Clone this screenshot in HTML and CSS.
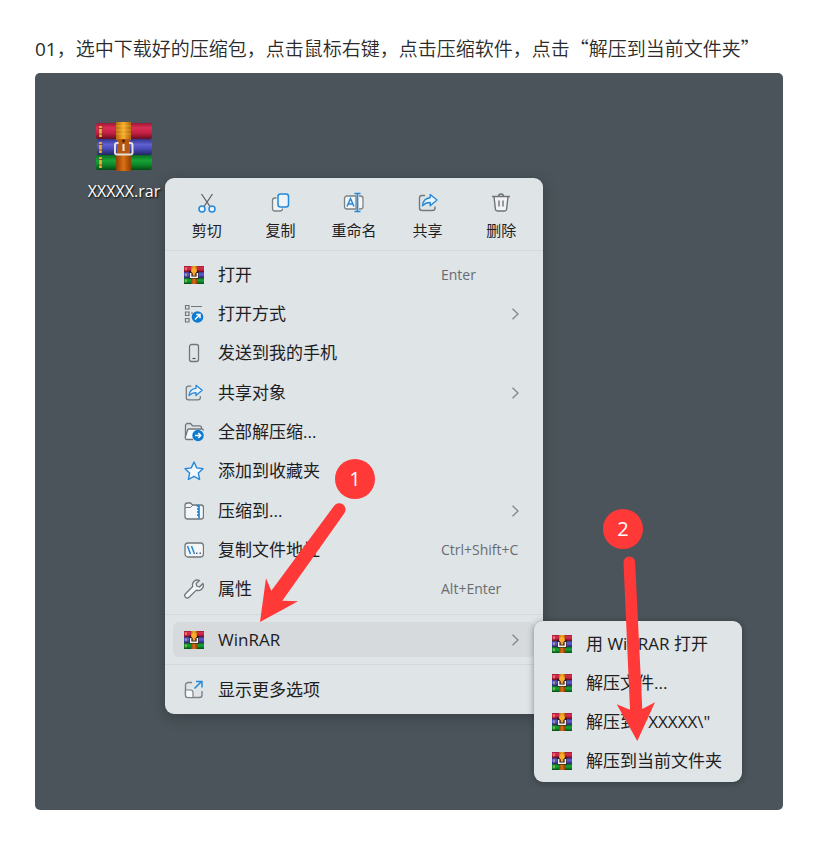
FILE: index.html
```html
<!DOCTYPE html>
<html lang="zh-CN">
<head>
<meta charset="utf-8">
<meta name="viewport" content="width=device-width, initial-scale=1">
<title>解压步骤</title>
<link rel="stylesheet" href="styles.css">
</head>
<body>
<svg class="defs" aria-hidden="true">
  <defs>
    <linearGradient id="red" x1="0" y1="0" x2="0" y2="1"><stop offset="0" stop-color="#9c1836"/><stop offset=".3" stop-color="#d92f55"/><stop offset=".65" stop-color="#c01f42"/><stop offset="1" stop-color="#650d20"/></linearGradient>
    <linearGradient id="blue" x1="0" y1="0" x2="0" y2="1"><stop offset="0" stop-color="#33358a"/><stop offset=".35" stop-color="#5f60d2"/><stop offset=".65" stop-color="#4547b2"/><stop offset="1" stop-color="#24265f"/></linearGradient>
    <linearGradient id="green" x1="0" y1="0" x2="0" y2="1"><stop offset="0" stop-color="#0b6a20"/><stop offset=".35" stop-color="#18a336"/><stop offset=".65" stop-color="#0d8a2a"/><stop offset="1" stop-color="#054a14"/></linearGradient>
    <linearGradient id="belt" x1="0" y1="0" x2="1" y2="0"><stop offset="0" stop-color="#b56a0a"/><stop offset=".5" stop-color="#f5ad2c"/><stop offset="1" stop-color="#b0640a"/></linearGradient>
    <linearGradient id="belt-low" x1="0" y1="0" x2="1" y2="0"><stop offset="0" stop-color="#8c3f05"/><stop offset=".5" stop-color="#dc7013"/><stop offset="1" stop-color="#8c3f05"/></linearGradient>
    <symbol id="rar-large" viewBox="0 0 58 50">
      <rect x="1" y="1" width="56" height="16" rx="2" fill="url(#red)"/>
      <rect x="2" y="17" width="55" height="16" rx="2" fill="url(#blue)"/>
      <rect x="1" y="33" width="56" height="15" rx="2" fill="url(#green)"/>
      <path d="M5.500 4v11M5.500 20v11M5.500 35v11" stroke="#e8b53c" stroke-width="2.600"/>
      <path d="M3.500 6.500h4.500M3.500 12h4.500M3.500 22.500h4.500M3.500 28h4.500M3.500 37.500h4.500M3.500 43h4.500" stroke="#6a3a1c" stroke-width=".8"/>
      <path d="M21 0h15v18H21z" fill="url(#belt)"/>
      <path d="M21 4h15M21 8h15M21 12h15" stroke="#ffd45a" stroke-width="1.200" opacity=".4"/>
      <path d="M22 17h13v15H22z" fill="#b8570e"/>
      <path d="M21 32h15v17H21z" fill="url(#belt-low)"/>
      <circle cx="28.500" cy="19" r="1.400" fill="#4c2004"/>
      <path d="M23.500 21h-1.500a2 2 0 0 0-2 2v7.500a2 2 0 0 0 2 2h13.500a2 2 0 0 0 2-2V23a2 2 0 0 0-2-2H34" fill="none" stroke="#e4e1dc" stroke-width="2"/>
      <path d="M28.500 22v7" stroke="#f1eee9" stroke-width="2"/>
    </symbol>
    <symbol id="rar-small" viewBox="0 0 60 54">
      <rect width="60" height="18" fill="url(#red)"/>
      <rect y="18" width="60" height="18" fill="url(#blue)"/>
      <rect y="36" width="60" height="18" fill="url(#green)"/>
      <path d="M6 4v9M6 22v9M6 40v9" stroke="#f1c27b" stroke-width="3"/>
      <path d="M16 14h28v24H16z" fill="#2c1a18"/>
      <path d="M21 0h18v18H21z" fill="url(#belt)"/>
      <path d="M21 38h18v16H21z" fill="url(#belt-low)"/>
      <circle cx="30" cy="14" r="8" fill="#ffad2e"/>
      <path d="M20 21v13h20V21" fill="none" stroke="#f5efea" stroke-width="4.500"/>
      <path d="M30 20v9" stroke="#f3a23c" stroke-width="8"/>
    </symbol>
    <symbol id="cut" viewBox="0 0 22 22">
      <path d="M5.500 2 14 14.500M16.500 2 8 14.500" fill="none" stroke="#64605f" stroke-width="1.300"/>
      <g fill="#e8f3fb" stroke="#2688d8" stroke-width="1.500"><circle cx="6" cy="17" r="3"/><circle cx="16" cy="17" r="3"/></g>
    </symbol>
    <symbol id="copy" viewBox="0 0 22 22">
      <path d="M7.500 6H6a2.500 2.500 0 0 0-2.500 2.500v8A2.500 2.500 0 0 0 6 19h5a2.500 2.500 0 0 0 2.500-2.500" fill="#f0f2f3" stroke="#7c8387" stroke-width="1.300"/>
      <rect x="9" y="2" width="10.500" height="13" rx="2.500" fill="#edf4f9" stroke="#2688d8" stroke-width="1.500"/>
    </symbol>
    <symbol id="rename" viewBox="0 0 22 22">
      <path d="M13 4H4a2.500 2.500 0 0 0-2.500 2.500v8A2.500 2.500 0 0 0 4 17h9zM16 4h1.500A2.500 2.500 0 0 1 20 6.500v8a2.500 2.500 0 0 1-2.500 2.500H16" fill="#f3f5f7" stroke="#7c8387" stroke-width="1.300"/>
      <path d="m4 14.500 3.500-8 3.500 8M5.200 12h4.600" fill="none" stroke="#2688d8" stroke-width="1.500"/>
      <path d="M11.500 1.500h6M14.500 1.500v18M11.500 19.500h6" fill="none" stroke="#2688d8" stroke-width="1.500"/>
    </symbol>
    <symbol id="share" viewBox="0 0 22 22">
      <path d="M8 3.500H5A2.500 2.500 0 0 0 2.500 6v10A2.500 2.500 0 0 0 5 18.500h10.500A2.500 2.500 0 0 0 18 16v-1.500" fill="none" stroke="#737a7e" stroke-width="1.400"/>
      <path d="M13.200 2.500 20 8l-6.800 5.800v-3.300c-3.700-.2-5.500 1-7.700 3.200.4-4.500 3-7.500 7.700-7.900z" fill="#eaf4fc" stroke="#2688d8" stroke-width="1.400" stroke-linejoin="round"/>
    </symbol>
    <symbol id="trash" viewBox="0 0 22 22">
      <path d="m4 4.500 1.400 12.700a2 2 0 0 0 2 1.800h7.200a2 2 0 0 0 2-1.800L18 4.500" fill="#f0f2f3" stroke="#707477" stroke-width="1.400"/>
      <path d="M2 4.500h18M8.500 4.500a2.500 2.500 0 0 1 5 0M9 8.500v6M13 8.500v6" fill="none" stroke="#707477" stroke-width="1.400"/>
    </symbol>
    <symbol id="open-with" viewBox="0 0 20 20">
      <path d="M1.500 1.500h3.500v3.500H1.500zM1.500 8h3.500v3.500H1.500zM1.500 14.500h3.500v3.500H1.500zM7 2.500h11M7 9h2" fill="none" stroke="#6f777b" stroke-width="1.200"/>
      <circle cx="13.500" cy="13" r="5.800" fill="#0c7bd2"/>
      <path d="m11 15.500 4.700-4.700M12.300 10.500H16v3.700" fill="none" stroke="#fff" stroke-width="1.500"/>
    </symbol>
    <symbol id="phone" viewBox="0 0 20 20">
      <rect x="5.500" y="1.500" width="9" height="17" rx="2" fill="none" stroke="#6f777b" stroke-width="1.300"/>
      <path d="M8.500 15.500h3" stroke="#4d5458" stroke-width="1.200"/>
    </symbol>
    <symbol id="extract" viewBox="0 0 20 20">
      <path d="M1.500 15V3.500a2 2 0 0 1 2-2h3l2 2.300h7a2 2 0 0 1 2 2V7" fill="none" stroke="#6f777b" stroke-width="1.300"/>
      <path d="M9 17.500H3a1.800 1.800 0 0 1-1.700-2.300L3.600 8a1.600 1.600 0 0 1 1.500-1h12.600a1.500 1.500 0 0 1 1.500 1.700" fill="#f7f9fa" stroke="#6f777b" stroke-width="1.300"/>
      <circle cx="14" cy="13.500" r="5.700" fill="#0c7bd2"/>
      <path d="M11 13.500h5.500M14.300 11l2.500 2.500-2.500 2.500" fill="none" stroke="#fff" stroke-width="1.400"/>
    </symbol>
    <symbol id="star" viewBox="0 0 20 20">
      <path d="m10 1 2.700 5.900 6.300.8-4.600 4.400 1.200 6.400L10 15.300l-5.600 3.200 1.200-6.400L1 7.700l6.300-.8z" fill="#f2f8fc" stroke="#2688d8" stroke-width="1.400" stroke-linejoin="round"/>
    </symbol>
    <symbol id="zip" viewBox="0 0 20 20">
      <path d="M1 4.500A2.500 2.500 0 0 1 3.500 2h3l2 2h8.500a2.500 2.500 0 0 1 2.500 2.500v9A2.500 2.500 0 0 1 17 18H3.500A2.500 2.500 0 0 1 1 15.500z" fill="#f3f5f6" stroke="#6f777b" stroke-width="1.300"/>
      <path d="M1.500 6.500h5L9 4" fill="none" stroke="#6f777b"/>
      <path d="M12.500 5h2.500v3h-2M15 8v3h-2M15 11v3h-2M15 14v3.500" fill="none" stroke="#0c7bd2" stroke-width="1.500"/>
    </symbol>
    <symbol id="path" viewBox="0 0 20 20">
      <rect x="1" y="3" width="18.500" height="14" rx="3" fill="#f3f5f6" stroke="#6f777b" stroke-width="1.300"/>
      <path d="m3.500 6 3 8M7.500 6l3 8" fill="none" stroke="#2688d8" stroke-width="1.500"/>
      <path d="M12 13.300h1.500M15.500 13.300H17" stroke="#54616a" stroke-width="1.600"/>
    </symbol>
    <symbol id="wrench" viewBox="0 0 20 20">
      <path d="M15.500 1.500a5 5 0 0 0-6.800 6L1.500 14.800a2.400 2.400 0 0 0 3.500 3.500l7.400-7.200a5 5 0 0 0 6.500-6.600L15.500 8 12.700 7l-.6-2.600z" fill="#f3f5f6" stroke="#6f777b" stroke-width="1.300" stroke-linejoin="round"/>
    </symbol>
    <symbol id="more" viewBox="0 0 20 20">
      <path d="M8 2.500H4A2.500 2.500 0 0 0 1.500 5v10A2.500 2.500 0 0 0 4 17.500h11.500A2.500 2.500 0 0 0 18 15v-4" fill="none" stroke="#7c8387" stroke-width="1.400"/>
      <path d="M1.500 10h5A2.500 2.500 0 0 1 9 12.500v5H4A2.500 2.500 0 0 1 1.500 15z" fill="#f7f9fa" stroke="#7c8387" stroke-width="1.200"/>
      <path d="m10.500 8.500 7-7M12 1.500h6v6" fill="none" stroke="#2688d8" stroke-width="1.500"/>
    </symbol>
    <symbol id="chevron" viewBox="0 0 12 12">
      <path d="m2.500 0.800 5.500 5.200-5.500 5.200" fill="none" stroke="#82878a" stroke-width="1.300"/>
    </symbol>
  </defs>
</svg>

<main class="article">
  <h1 class="step"><span class="latin">01</span>，选中下载好的压缩包，点击鼠标右键，点击压缩软件，点击“解压到当前文件夹”</h1>

  <section class="desktop">
    <a class="file" href="#">
      <svg class="file-icon"><use href="#rar-large"/></svg>
      <span>XXXXX.rar</span>
    </a>

    <div class="menu context">
      <div class="toolbar">
        <button class="tool"><svg><use href="#cut"/></svg>剪切</button>
        <button class="tool"><svg><use href="#copy"/></svg>复制</button>
        <button class="tool"><svg><use href="#rename"/></svg>重命名</button>
        <button class="tool"><svg><use href="#share"/></svg>共享</button>
        <button class="tool"><svg><use href="#trash"/></svg>删除</button>
      </div>
      <div class="items main-items">
        <button class="item"><svg class="icon"><use href="#rar-small"/></svg><span>打开</span><kbd>Enter</kbd></button>
        <button class="item"><svg class="icon"><use href="#open-with"/></svg><span>打开方式</span><svg class="chevron"><use href="#chevron"/></svg></button>
        <button class="item"><svg class="icon"><use href="#phone"/></svg><span>发送到我的手机</span></button>
        <button class="item"><svg class="icon"><use href="#share"/></svg><span>共享对象</span><svg class="chevron"><use href="#chevron"/></svg></button>
        <button class="item"><svg class="icon"><use href="#extract"/></svg><span>全部解压缩...</span></button>
        <button class="item"><svg class="icon"><use href="#star"/></svg><span>添加到收藏夹</span></button>
        <button class="item"><svg class="icon"><use href="#zip"/></svg><span>压缩到...</span><svg class="chevron"><use href="#chevron"/></svg></button>
        <button class="item"><svg class="icon"><use href="#path"/></svg><span>复制文件地址</span><kbd>Ctrl+Shift+C</kbd></button>
        <button class="item"><svg class="icon"><use href="#wrench"/></svg><span>属性</span><kbd>Alt+Enter</kbd></button>
      </div>
      <div class="items group">
        <button class="item active"><svg class="icon"><use href="#rar-small"/></svg><span>WinRAR</span><svg class="chevron"><use href="#chevron"/></svg></button>
      </div>
      <div class="items group">
        <button class="item"><svg class="icon"><use href="#more"/></svg><span>显示更多选项</span></button>
      </div>
    </div>

    <div class="menu submenu">
      <button class="item"><svg class="icon"><use href="#rar-small"/></svg><span>用 WinRAR 打开</span></button>
      <button class="item"><svg class="icon"><use href="#rar-small"/></svg><span>解压文件...</span></button>
      <button class="item"><svg class="icon"><use href="#rar-small"/></svg><span>解压到 "XXXXX\"</span></button>
      <button class="item"><svg class="icon"><use href="#rar-small"/></svg><span>解压到当前文件夹</span></button>
    </div>

    <svg class="arrows" viewBox="35 73 748 737" aria-hidden="true">
      <path d="M334 506a6 6 0 0 1 10.500 7L282.300 600.700 298 601.300 260 622 266 578.300 271.300 590.700z"/>
      <path d="M623.500 562.500a5.800 5.800 0 0 1 11.600-.5L642.300 709 655 702.300 637.300 741 616.700 704.300 630 709.700z"/>
    </svg>
    <span class="badge first">1</span>
    <span class="badge second">2</span>
  </section>
</main>
</body>
</html>
```

FILE: styles.css
```css
* {
  box-sizing: border-box;
}

body {
  margin: 0;
  background: #fff;
  color: #2b2b2b;
  font-family: "Open Sans", "Noto Sans CJK SC", sans-serif;
}

.defs {
  position: absolute;
  width: 0;
  height: 0;
}

.article {
  padding: 34px 41px 52px 35px;
}

.step {
  margin: 0 0 10px;
  font-family: "Noto Sans CJK SC", sans-serif;
  font-size: 19px;
  font-weight: 350;
  line-height: 28px;
}

.latin {
  font-family: "Open Sans", sans-serif;
  font-weight: 400;
}

.desktop {
  position: relative;
  min-height: 737px;
  overflow: hidden;
  border-radius: 5px;
  background: #4b545a;
}

.file {
  position: absolute;
  top: 49px;
  left: 49px;
  display: flex;
  flex-direction: column;
  align-items: center;
  gap: 8px;
  width: 80px;
  color: #fff;
  font-size: 16px;
  line-height: 22px;
  text-decoration: none;
  text-shadow: 1px 1px 2px #000;
}

.file-icon {
  width: 58px;
  height: 50px;
}

.menu {
  position: absolute;
  border-radius: 9px;
  background: #dfe4e7;
  box-shadow: 0 3px 14px rgba(20, 30, 30, 0.35);
}

.context {
  top: 105px;
  left: 130px;
  width: 378px;
}

.submenu {
  top: 548px;
  left: 499px;
  display: grid;
  grid-auto-rows: 1fr;
  width: 208px;
  min-height: 161px;
  padding: 3px 7px 1px;
  box-shadow: 0 1px 6px rgba(20, 30, 30, 0.45);
}

.toolbar {
  display: grid;
  grid-template-columns: repeat(5, 1fr);
  padding: 14px 5px 10px;
}

.tool,
.item {
  padding: 0;
  border: 0;
  background: none;
  color: #1d2022;
  font-family: inherit;
}

.tool {
  display: flex;
  flex-direction: column;
  align-items: center;
  gap: 6px;
  font-size: 15px;
  line-height: 20px;
}

.tool svg {
  width: 22px;
  height: 22px;
}

.items {
  display: grid;
  padding: 0 8px;
  border-top: 1px solid #d2d8db;
}

.main-items {
  grid-auto-rows: 1fr;
  min-height: 364px;
  padding-top: 4px;
  padding-bottom: 5px;
}

.item {
  display: grid;
  grid-template-columns: 20px 1fr 82px;
  align-items: center;
  column-gap: 14px;
  min-height: 35px;
  padding: 0 12px 0 11px;
  border-radius: 6px;
  font-size: 17px;
  line-height: 24px;
  text-align: left;
  white-space: nowrap;
}

.submenu .item {
  grid-template-columns: 20px 1fr;
}

.group {
  padding-top: 7px;
  padding-bottom: 7px;
}

.active {
  background: #d6dadd;
}

.icon {
  width: 20px;
  height: 20px;
}

.item kbd {
  color: #686d70;
  font-family: inherit;
  font-size: 14px;
}

.chevron {
  justify-self: end;
  width: 12px;
  height: 12px;
  margin-right: 1px;
}

.arrows {
  position: absolute;
  top: 0;
  left: 0;
  width: 748px;
  height: 737px;
  fill: #ff3838;
}

.badge {
  position: absolute;
  width: 40px;
  height: 40px;
  border-radius: 50%;
  background: #ff3838;
  color: #fff;
  font-size: 20px;
  line-height: 40px;
  text-align: center;
}

.first {
  top: 386px;
  left: 300px;
}

.second {
  top: 436px;
  left: 568px;
}
```
